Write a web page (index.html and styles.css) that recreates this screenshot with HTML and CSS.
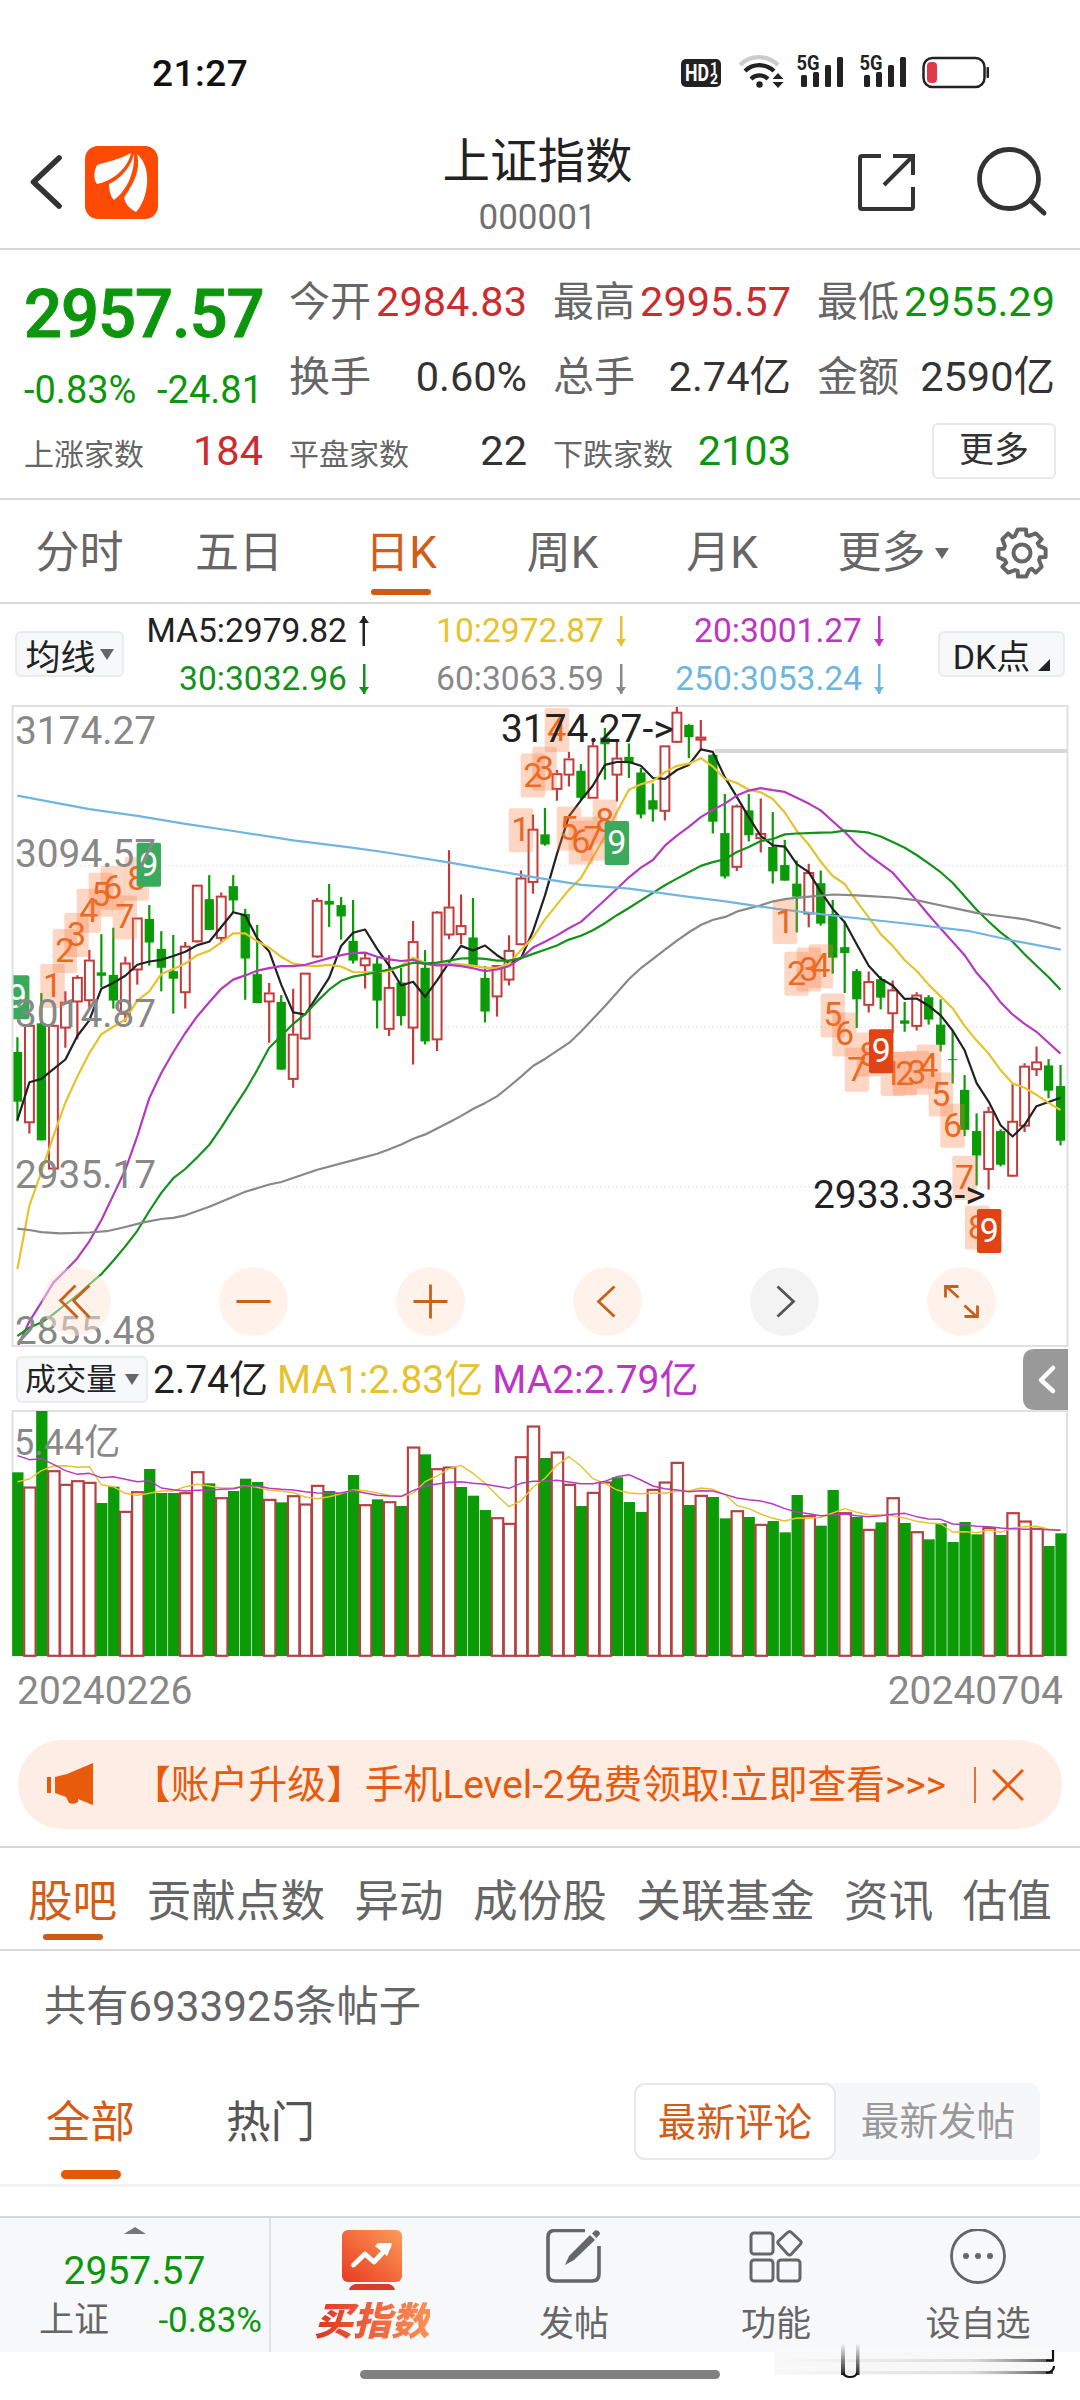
FILE: index.html
```html
<!DOCTYPE html>
<html lang="zh-CN">
<head>
<meta charset="utf-8">
<title>上证指数</title>
<link rel="stylesheet" href="styles.css">
</head>
<body>
<div class="status">
  <span class="clock">21:27</span>
  <svg class="status-icons" width="320" height="40" viewBox="680 52 320 40">
    <rect x="681" y="59" width="40" height="28" rx="5" fill="#222"/>
    <text x="685" y="81" font-size="23" font-weight="700" fill="#fff" textLength="24" lengthAdjust="spacingAndGlyphs">HD</text>
    <text x="710" y="72.500" font-size="14" font-weight="700" fill="#fff">1</text>
    <text x="710" y="84" font-size="14" font-weight="700" fill="#fff">2</text>
    <g fill="none" stroke="#222" stroke-width="4.2">
      <path d="M740 65a27 27 0 0 1 38 0" stroke="#ccc"/>
      <path d="M745 71a21 21 0 0 1 29 0"/>
      <path d="M751 79a12 12 0 0 1 17 0"/>
    </g>
    <circle cx="759.500" cy="84.500" r="3.2" fill="#222"/>
    <path d="M778 73l5.500 6h-11zM778 88l5.500-6h-11z" fill="#222"/>
    <g id="sig" fill="#222">
      <text x="796.500" y="70" font-size="20" font-weight="700" textLength="23" lengthAdjust="spacingAndGlyphs">5G</text>
      <rect x="801" y="75" width="6" height="12" rx="1.500"/><rect x="813" y="72" width="6" height="15" rx="1.500"/>
      <rect x="825" y="65" width="6" height="22" rx="1.500"/><rect x="837" y="57" width="6" height="30" rx="1.500"/>
    </g>
    <use href="#sig" x="63"/>
    <rect x="923.5" y="58" width="61" height="29" rx="9" fill="none" stroke="#222" stroke-width="2.5"/>
    <rect x="927" y="62" width="10" height="21" rx="4" fill="#e0394a"/>
    <rect x="986.5" y="67" width="2.5" height="11" rx="1" fill="#222"/>
  </svg>
</div>
<header class="header">
  <svg width="160" height="80" viewBox="20 142 160 80">
    <path d="M59 158L33.500 182L59 206" fill="none" stroke="#333" stroke-width="5.600" stroke-linecap="round" stroke-linejoin="round"/>
    <rect x="85" y="146" width="73" height="73" rx="13" fill="#fe4a05"/>
    <g fill="#fff">
      <path d="M131 153C121 159 106 162 97 165C93 173 94 180 97 184C113 181 128 168 131 153Z"/>
      <path d="M134 154C130 170 118 180 109 184C109 191 111 197 114 200C126 191 135 174 134 154Z"/>
      <path d="M137 154C142 174 129 189 124 198C126 205 130 209 136 212C147 201 154 169 137 154Z"/>
    </g>
  </svg>
  <div class="title"><h1>上证指数</h1><p>000001</p></div>
  <svg width="200" height="80" viewBox="850 142 200 80" fill="none" stroke="#333" stroke-width="4">
    <path d="M881 156H862Q860 156 860 158V207Q860 209 862 209H911Q913 209 913 207V187M893 156H913V175M913 156L884 185"/>
    <circle cx="1009" cy="179" r="29.5" stroke-width="4.8"/><path d="M1030 200L1044 213" stroke-width="5" stroke-linecap="round"/>
  </svg>
</header>
<section class="quote">
  <div class="quote-main">
    <strong>2957.57</strong>
    <div class="pair green chg"><span>-0.83%</span><span>-24.81</span></div>
    <div class="pair small"><span>上涨家数</span><b class="red">184</b></div>
  </div>
  <div class="quote-col">
    <div class="pair"><span>今开</span><b class="red">2984.83</b></div>
    <div class="pair"><span>换手</span><b>0.60%</b></div>
    <div class="pair small"><span>平盘家数</span><b>22</b></div>
  </div>
  <div class="quote-col">
    <div class="pair"><span>最高</span><b class="red">2995.57</b></div>
    <div class="pair"><span>总手</span><b>2.74亿</b></div>
    <div class="pair small"><span>下跌家数</span><b class="green">2103</b></div>
  </div>
  <div class="quote-col">
    <div class="pair"><span>最低</span><b class="green">2955.29</b></div>
    <div class="pair"><span>金额</span><b>2590亿</b></div>
    <button class="more">更多</button>
  </div>
</section>
<nav class="periods">
  <span>分时</span><span>五日</span><span class="on">日K</span><span>周K</span><span>月K</span><span class="drop">更多<i></i></span>
  <svg width="52" height="52" viewBox="-26 -26 52 52" fill="none" stroke="#666" stroke-width="4" stroke-linejoin="round">
    <circle r="8.5"/>
    <path id="gear"/>
  </svg>
</nav>
<section class="legend">
  <button class="chip ma">均线<i></i></button>
  <div class="ma-grid">
    <span class="c5">MA5:2979.82<i class="arrow up"></i></span><span class="c10">10:2972.87<i class="arrow"></i></span><span class="c20">20:3001.27<i class="arrow"></i></span>
    <span class="c30">30:3032.96<i class="arrow"></i></span><span class="c60">60:3063.59<i class="arrow"></i></span><span class="c250">250:3053.24<i class="arrow"></i></span>
  </div>
  <button class="chip dk">DK点<i></i></button>
</section>
<svg id="kline" class="chart" width="1080" height="642" viewBox="0 705 1080 642"></svg>
<section class="vol-head">
  <button class="chip vol">成交量<i></i></button>
  <span>2.74亿</span><span class="c10">MA1:2.83亿</span><span class="c20">MA2:2.79亿</span>
  <svg class="collapse" width="45" height="61" viewBox="0 0 45 61"><path d="M12 0H45V61H12Q0 61 0 49V12Q0 0 12 0Z" fill="#999"/><path d="M30 19L18 31L30 42" fill="none" stroke="#fff" stroke-width="4.5" stroke-linecap="round" stroke-linejoin="round"/></svg>
</section>
<svg id="volume" class="chart" width="1080" height="248" viewBox="0 1409 1080 248"></svg>
<div class="dates"><span>20240226</span><span>20240704</span></div>
<div class="banner">
  <svg width="50" height="44" viewBox="0 0 50 44" fill="#e85a0c"><rect x="0" y="14" width="4" height="16"/><path d="M8 14L20 11L46 0V42L31 36V39Q27 42 22 40L19 34L8 30Z"/></svg>
  <p>【账户升级】手机Level-2免费领取!立即查看&gt;&gt;&gt;</p><i></i>
  <svg width="32" height="32" viewBox="0 0 32 32"><path d="M1 1L31 31M31 1L1 31" stroke="#e85a0c" stroke-width="3"/></svg>
</div>
<nav class="topics"><span class="on">股吧</span><span>贡献点数</span><span>异动</span><span>成份股</span><span>关联基金</span><span>资讯</span><span>估值</span></nav>
<p class="count">共有6933925条帖子</p>
<div class="filters">
  <span class="on">全部</span><span>热门</span>
  <div class="switch"><button class="active">最新评论</button><button>最新发帖</button></div>
</div>
<footer class="bottom">
  <div class="index"><i></i><strong>2957.57</strong><div><span>上证</span><b>-0.83%</b></div></div>
  <div class="item hot">
    <svg width="66" height="66" viewBox="0 0 66 66">
      <defs><linearGradient id="g" x1="0" y1="1" x2="1" y2="0"><stop offset="0" stop-color="#e93a20"/><stop offset="1" stop-color="#fd9b58"/></linearGradient></defs>
      <rect x="3" y="1" width="60" height="52" rx="6" fill="url(#g)"/><path d="M16 55H50Q55 56 56 61H10Q11 56 16 55Z" fill="#dc3a2c"/>
      <path d="M14.500 36L26 25L35 33L47 20" fill="none" stroke="#fff" stroke-width="4.800" stroke-linejoin="round" stroke-linecap="round"/><path d="M39 14H52.500V17L48 27L36 17Z" fill="#fff"/>
    </svg><span>买指数</span></div>
  <div class="item">
    <svg width="66" height="66" viewBox="0 0 66 66" fill="none" stroke="#666" stroke-width="3.6"><path d="M44 1.500H14Q7 1.500 7 8V45Q7 52 14 52H51Q58 52 58 45V17"/><path d="M24 36L28 27L49 6L54 11L33 31Z" fill="#666" stroke="none"/><path d="M51 4.500L54 1.500Q58 .5 59 5L55.500 9Z" fill="#666" stroke="none"/></svg><span>发帖</span></div>
  <div class="item">
    <svg width="66" height="66" viewBox="0 0 66 66" fill="none" stroke="#666" stroke-width="3"><rect x="8" y="4" width="22" height="21" rx="3"/><rect x="8" y="31" width="22" height="21" rx="3"/><rect x="35" y="31" width="22" height="21" rx="3"/><path d="M44.500 3.500Q46.500 1.500 48.500 3.500L57.500 12Q59 13.500 57.500 15L48.500 25Q46.500 27 44.500 25L35.500 15Q34 13.500 35.500 12Z"/></svg><span>功能</span></div>
  <div class="item">
    <svg width="66" height="66" viewBox="0 0 66 66" fill="#666"><circle cx="33" cy="27" r="26.500" fill="none" stroke="#666" stroke-width="2.800"/><circle cx="21" cy="27" r="3"/><circle cx="33" cy="27" r="3"/><circle cx="45" cy="27" r="3"/></svg><span>设自选</span></div>
</footer>
<div class="home"><i></i></div>
<svg class="smudge" width="300" height="40" viewBox="765 2340 300 40">
  <defs><linearGradient id="s" x1="0" x2="1"><stop offset="0" stop-color="#888" stop-opacity="0"/><stop offset=".7" stop-color="#888" stop-opacity=".25"/><stop offset="1" stop-color="#333" stop-opacity=".85"/></linearGradient>
  <linearGradient id="v" x1="0" y1="0" x2="0" y2="1"><stop offset="0" stop-color="#000" stop-opacity="0"/><stop offset="1" stop-color="#000"/></linearGradient>
  <linearGradient id="w" x1="0" y1="0" x2="0" y2="1"><stop offset="0" stop-color="#fff" stop-opacity="0"/><stop offset="1" stop-color="#fff"/></linearGradient></defs>
  <path d="M775 2342H1050V2375H775Z" fill="url(#w)"/>
  <path d="M775 2352H1050V2375H775Z" fill="#ddd" opacity=".2"/>
  <rect x="780" y="2359" width="273" height="3" fill="url(#s)"/><rect x="780" y="2371" width="273" height="3" fill="url(#s)"/>
  <rect x="841" y="2343" width="4" height="32" fill="url(#v)" opacity=".85"/><rect x="856" y="2343" width="3.500" height="32" fill="url(#v)" opacity=".85"/>
  <path d="M843 2373Q845 2377 850 2377Q856 2377 857 2373M1053 2350V2360.500H1046M1054 2366Q1054 2372 1046 2373" fill="none" stroke="#111" stroke-width="2.200"/>
</svg>
<script src="chart.js"></script>
</body>
</html>
```
FILE: styles.css
```css
* { box-sizing: border-box; }
body { margin: 0; width: 1080px; height: 2400px; overflow: hidden; background: #fff; color: #333; font-family: Roboto, "Noto Sans CJK SC", sans-serif; display: flex; flex-direction: column; }
body > * { flex: none; }
h1, p { margin: 0; font-weight: 400; }
b { font-weight: 400; }
button { font: inherit; color: inherit; padding: 0; background: none; border: 0; }
svg { display: block; flex: none; }
.red { color: #cb2c2f; }
.green { color: #0d960d; }
.status { height: 142px; padding: 52px 80px 0 152px; display: flex; justify-content: space-between; }
.clock { font-size: 37px; line-height: 43px; font-weight: 500; color: #111; letter-spacing: .5px; }
.header { height: 108px; padding: 0 30px 0 20px; border-bottom: 2px solid #d8d8d8; display: flex; justify-content: space-between; }
.title { text-align: center; margin-right: -45px; margin-top: -13px; }
.title h1 { font-size: 47.500px; line-height: 66px; color: #222; }
.title p { font-size: 35px; line-height: 42px; margin-top: 2px; color: #707070; }
.quote { height: 250px; border-bottom: 2px solid #d8d8d8; padding: 22px 25px 0 24px; display: grid; grid-template-columns: 239px 238px 238px 238px; column-gap: 26px; }
.quote-main { display: grid; grid-template-columns: 239px; grid-template-rows: 84px 67px 60px; align-items: center; }
.quote-main strong { font-size: 67px; line-height: 84px; font-weight: 500; color: #0d960d; letter-spacing: -1.1px; -webkit-text-stroke: 1px #0d960d; }
.quote-col { display: grid; grid-template-rows: 59px 91px 61px; align-items: center; }
.pair { display: flex; justify-content: space-between; align-items: baseline; font-size: 41px; line-height: 60px; white-space: nowrap; }
.pair span { color: #666; }
.pair b { font-size: 41.500px; }
.pair.small span { font-size: 30px; }
.pair.chg span { font-size: 38px; color: #0d960d; }
.more { justify-self: end; width: 124px; height: 56px; margin: -4px -1px 0 0; border: 2px solid #e8e8e8; border-radius: 6px; font-size: 35px; line-height: 50px; }
.periods { height: 104px; border-bottom: 2px solid #d8d8d8; display: grid; grid-template-columns: 159px 160px 164px 159px 160px 182px 76px; justify-items: center; align-items: center; font-size: 44px; line-height: 106px; color: #666; }
.periods .on, .topics .on, .filters .on { color: #d35d16; position: relative; }
.periods .on::after, .topics .on::after, .filters .on::after { content: ""; position: absolute; left: calc(50% - 30px); bottom: 11px; width: 60px; height: 6px; border-radius: 3px; background: #ce5a14; }
.drop { display: flex; align-items: center; gap: 9px; }
.drop i, .chip i { border: solid transparent; border-width: 11px 7.500px 0; border-top-color: #666; }
.legend { height: 101px; padding: 0 15px; display: flex; align-items: flex-start; color: #222; }
.chip { background: #f6f8f9; border: 2px solid #e9ebec; border-radius: 6px; display: flex; align-items: center; justify-content: center; font-size: 35px; white-space: nowrap; color: #222; }
.chip.ma { width: 109px; height: 46px; margin-top: 27px; gap: 4px; }
.chip.dk { width: 127px; height: 46px; margin-top: 27px; font-size: 34px; gap: 8px; }
.chip.dk i { border-width: 0 0 12px 12px; border-color: transparent transparent #222; align-self: flex-end; margin-bottom: 4px; }
.ma-grid { flex: 1; display: grid; grid-template-columns: 246px 257px 258px; grid-template-rows: 48px 48px; padding-top: 3px; font-size: 33.600px; line-height: 48px; }
.ma-grid span { display: flex; justify-content: flex-end; align-items: center; gap: 11px; }
.arrow { position: relative; width: 12px; height: 30px; background: linear-gradient(currentColor, currentColor) 50% / 2.500px 100% no-repeat; }
.arrow::after { content: ""; position: absolute; bottom: 0; left: 1px; border: solid transparent; border-width: 7px 5px 0; border-top-color: currentColor; }
.arrow.up { transform: rotate(180deg); }
.c5 { color: #222; } .c10 { color: #e6c22d; } .c20 { color: #bd35c5; } .c30 { color: #12921a; } .c60 { color: #888; } .c250 { color: #6eb6e0; }
.vol-head { height: 62px; padding: 2px 12px 0 16px; display: flex; gap: 9px; font-size: 39px; line-height: 62px; color: #222; }
.chip.vol { width: 132px; height: 47px; margin: 7px -4px 0 0; font-size: 30.500px; gap: 8px; }
.collapse { margin-left: auto; }
.dates { height: 83px; padding: 11px 17px 0; display: flex; justify-content: space-between; font-size: 39px; line-height: 46px; color: #888; }
.banner { height: 89px; margin: 0 18px; padding: 0 38px 0 29px; border-radius: 44px; background: #fdede4; color: #e85a0c; display: flex; align-items: center; font-size: 38.800px; }
.banner p { margin-left: 35px; white-space: nowrap; flex: 1; line-height: 60px; }
.banner i { width: 2px; height: 36px; background: #e0763c; margin-right: 16px; }
.topics { height: 105px; margin-top: 17px; border: solid #d8d8d8; border-width: 2px 0; padding: 0 28px; display: flex; justify-content: space-between; font-size: 44.600px; line-height: 109px; color: #666; }
.topics .on::after { bottom: 9px; }
.count { height: 107px; padding: 0 44px; font-size: 42.200px; line-height: 111px; color: #666; }
.filters { height: 129px; padding: 0 40px 0 46px; border-bottom: 3px solid #f3f3f3; display: flex; align-items: flex-start; gap: 91px; font-size: 44.500px; line-height: 130px; color: #555; }
.filters .on::after { bottom: 9px; height: 9px; border-radius: 5px; background: #e4580b; }
.switch { margin: 25px 0 0 auto; display: flex; background: #f6f7f9; border-radius: 10px; font-size: 38.600px; line-height: 75px; color: #999; }
.switch button { width: 204px; height: 77px; }
.switch .active { width: 202px; color: #d35d16; background: #fff; border: 2px solid #e8e8e8; border-radius: 11px; }
.bottom { height: 136px; margin-top: 29px; background: #f6f8f9; border-top: 2px solid #d5d8d9; display: grid; grid-template-columns: 271px repeat(4, 202px); color: #666; }
.index { border-right: 2px solid #dfe2e3; display: flex; flex-direction: column; align-items: center; color: #0d960d; }
.index > i { border: solid transparent; border-width: 0 11px 7px; border-bottom-color: #777; margin-top: 9px; }
.index strong { font-size: 39px; line-height: 46px; font-weight: 400; margin-top: 14px; }
.index > div { width: 223px; margin: -1px 0 0 32px; display: flex; justify-content: space-between; align-items: baseline; font-size: 35px; line-height: 56px; }
.index span { color: #666; }
.item { display: flex; flex-direction: column; align-items: center; padding-top: 11px; font-size: 35px; line-height: 52px; }
.item svg + span { margin-top: 4px; }
.hot span { font-size: 38.500px; font-weight: 900; font-style: italic; transform: translateY(-3px); background: linear-gradient(90deg, #dc3525, #fd9156); background-clip: text; color: transparent; }
.home { height: 47px; padding-top: 18px; }
.home i { display: block; width: 360px; height: 9px; margin: 0 auto; border-radius: 5px; background: #808080; }
.smudge { position: absolute; left: 765px; top: 2340px; }
.chart text { font-family: Roboto, "Noto Sans CJK SC", sans-serif; }
.axis { font-size: 38.800px; fill: #888; }
.note { font-size: 38.900px; fill: #222; }
.mark { font-size: 34px; text-anchor: middle; }
```
FILE: chart.js
```js
// Teeth of the settings gear: eight flat tips on a ring.
const teeth = [];
for (let k = 0; k < 8; k++) {
  for (const [o, r] of [[-.22, 24], [.22, 24], [.3, 18.5], [.5, 18.5]]) {
    const a = (k + o) * Math.PI / 4;
    teeth.push((r * Math.sin(a)).toFixed(1) + ' ' + (-r * Math.cos(a)).toFixed(1));
  }
}
document.getElementById('gear').setAttribute('d', 'M' + teeth.join('L') + 'Z');

const RED = '#c33c3c', GREEN = '#0a9b06';
const X = i => 17.4 + i * 11.99;
const GX = u => u / 3;                 // price pane: three units per pixel across
const Y = v => 690 + v / 2.376;        // price pane: 380 units per 79.7 points
const VY = v => 1340 + v / 3;          // volume pane
const line = (pts, color, w) => `<polyline points="${pts.map(p => p[0].toFixed(1) + ',' + p[1].toFixed(1)).join(' ')}" fill="none" stroke="${color}" stroke-width="${w}" stroke-linejoin="round"/>`;
const nums = s => s.trim().split(/[\s,]+/).map(Number);
const series = (s, f, c, w) => line(nums(s).map((v, i) => [X(i), f(v)]), c, w);
const points = (s, c, w) => line(s.trim().split(/\s+/).map(p => p.split(':')).map(([x, y]) => [GX(+x), Y(+y)]), c, w);

// direction, high, body top, body bottom, low
const candles = `G825,860,978,1025 R796,796,1028,1054 G720,792,1070,1070 R796,796,1138,1138 R716,741,803,850 R678,682,741,830 R618,641,738,755 G580,671,679,706 G565,677,738,757 R634,648,770,788
R541,541,665,700 G511,544,600,655 G573,615,660,716 G582,668,686,769 R599,608,719,757 R463,463,598,600 G440,497,570,570 R481,489,590,598 G440,466,500,530 G520,532,638,736
G558,675,744,744 R696,719,741,838 G725,741,902,902 R710,817,925,945 R672,672,829,831 R494,499,634,636 G461,501,510,563 G492,511,538,593 G499,596,643,650 R625,636,655,709
G636,650,738,804 R630,706,806,822 G660,695,775,797 R549,597,803,890 G618,660,835,842 R525,527,831,858 R381,515,582,592 R486,559,581,604 G494,588,655,655 G656,684,764,790
R654,654,729,776 R583,618,689,702 R429,446,605,606 R296,330,457,484 G280,343,367,370 R190,198,236,263 R147,163,202,229 G176,192,256,262 R122,132,257,257 G90,113,129,213
R121,161,202,265 G127,159,174,209 G185,196,296,305 G222,262,284,313 R132,132,288,310 R38,52,124,126 G81,83,112,162 R71,111,119,140 G152,154,313,341 G247,340,443,448
R272,275,421,430 G247,286,345,360 R258,340,353,386 G290,373,431,460 G356,416,453,453 G405,460,491,576 R413,433,532,564 G429,459,555,560 G499,532,636,674 G550,611,625,720
G663,668,735,803 R669,692,749,766 G680,687,731,759 R690,712,769,815 G741,785,793,812 R718,724,799,809 G725,730,783,795 G735,795,843,859 G810,877,879,935 G915,950,1045,1060
G1006,1048,1106,1177 R990,1001,1139,1187 G1044,1048,1128,1132 R937,1024,1155,1156 R887,893,1036,1050 R847,883,902,917 G877,892,952,970 G891,941,1071,1082`.split(/\s+/);

let k = '';
for (const v of [417, 800, 1180]) k += `<path d="M12 ${Y(v)}H1067" stroke="#ececec" stroke-width="1.5" stroke-dasharray="2 2"/>`;
k += `<path d="M715 ${Y(145)}H1067" stroke="#d8d8d8" stroke-width="4"/>`;
candles.forEach((c, i) => {
  const [h, t, b, l] = nums(c.slice(1)).map(Y), x = X(i);
  if (c[0] === 'G') k += `<path d="M${x} ${h}V${l}" stroke="${GREEN}" stroke-width="2.2"/><rect x="${x - 4.6}" y="${t}" width="9.300" height="${Math.max(b - t, 1)}" fill="${GREEN}"/>`;
  else k += `<path d="M${x} ${h}V${t}M${x} ${b}V${l}" stroke="${RED}" stroke-width="2.200"/><rect x="${x - 4.4}" y="${t + .8}" width="8.9" height="${Math.max(b - t - 1.2, 1)}" fill="#fff" stroke="${RED}" stroke-width="2"/>`;
});
k += series(`1022 932 924 901 878 822 785 710 696 679 653 645 641 632 622 606 598 563 528 535 590 621 700 766 771 728 684 608 577 569 615 655 702 693 729 690 648 608 619 607 630 648 637 573 488 390 300 262 227 178 171 171 180 209 211 190 178 141 147 207 254 302 347 369 372 414 433 479 520 552 604 655 686 702 734 733 750 773 809 856 934 978 1034 1061 1033 989 979 969`, Y, '#222', 2.2);
k += series(`1376 1225 1145 1060 980 919 863 818 800 783 738 716 675 663 650 630 620 600 578 578 597 612 634 650 655 656 653 657 670 671 670 668 655 636 648 652 650 652 655 660 660 650 618 588 545 510 475 447 397 348 290 237 224 216 195 180 175 162 182 211 221 237 243 259 291 335 367 408 442 461 502 540 580 608 642 667 700 728 756 798 833 864 903 935 945 962 981 998`, Y, '#e6c22d', 2.2);
k += series(`1562 1500 1455 1408 1380 1350 1310 1260 1200 1140 1060 970 910 860 815 775 742 710 688 678 667 661 656 656 653 645 637 630 625 624 634 640 644 641 651 654 653 656 661 668 664 656 637 612 598 583 566 551 525 499 472 445 422 404 370 346 325 302 285 270 251 239 233 238 242 256 270 286 312 337 367 392 413 434 467 500 534 567 598 630 672 704 742 771 793 812 838 864`, Y, '#b53abf', 2.2);
k += series(`1535 1515 1503 1483 1460 1438 1412 1388 1356 1322 1285 1238 1195 1160 1138 1110 1081 1040 995 952 903 850 822 793 770 740 712 691 681 676 670 664 656 648 650 648 643 638 637 639 643 643 637 627 617 607 593 584 571 554 535 518 500 482 464 448 433 418 409 402 385 373 359 354 343 341 340 339 338 334 336 339 348 361 375 392 412 433 458 490 522 550 576 598 628 655 682 712`, Y, '#12921a', 2.2);
k += points(`52:1280 88:1283 124:1288 180:1291 268:1289 320:1286 376:1276 430:1265 484:1257 520:1254 556:1248 628:1228 736:1192 808:1175 844:1169 952:1140 1080:1113 1132:1102 1168:1091 1204:1080 1240:1066 1276:1056 1348:1027 1384:1012 1420:995 1456:981 1492:965 1528:942 1564:918 1600:893 1636:876 1708:838 1744:811 1816:750 1888:686 1924:660 1996:616 2032:595 2068:575 2104:558 2140:546 2176:539 2212:526 2280:512 2320:502 2360:496 2428:491 2500:486 2572:488 2680:493 2752:500 2824:512 2880:521 2932:530 3000:537 3076:545 3130:555 3182:567`, '#888', 2.2);
k += points(`52:251 268:283 412:299 556:318 700:335 880:357 1050:374 1150:385 1350:410 1564:440 1744:463 1888:472 2050:490 2176:502 2330:520 2510:537 2730:556 2910:573 3030:594 3182:617`, '#70b5dd', 2.2);

// digit, left, top, optional fill for the closing nine
const marks = `9,15,678,g 1,121,651 2,158,568 3,193,530 4,230,472 5,266,434 6,302,418 7,338,488 8,374,396 9,410,363,g
1,1526,281 2,1562,151 3,1597,135 4,1634,43 5,1670,277 6,1706,310 7,1742,301 8,1778,260 9,1814,311,g
1,2318,499 2,2353,622 3,2390,612 4,2426,604 5,2462,721 6,2497,766 7,2534,850 8,2570,814 1,2642,860 9,2607,806,r
2,2678,859 3,2714,857 4,2750,842 5,2786,909 6,2821,983 7,2857,1107 8,2895,1225 9,2931,1233,r`.split(/\s+/);
k += '<defs><clipPath id="pane"><rect x="12" y="705" width="1056" height="642"/></clipPath></defs><g clip-path="url(#pane)">';
for (const m of marks) {
  const [d, x, y, c] = m.split(',');
  const fill = c === 'g' ? '#3aaa5c' : c === 'r' ? '#e04416' : 'rgba(252,118,58,.3)';
  k += `<rect x="${GX(+x)}" y="${Y(+y)}" width="24.4" height="44" rx="2" fill="${fill}"/><text class="mark" x="${GX(+x) + 12.2}" y="${Y(+y) + 33}" fill="${c ? '#fff' : '#e8691f'}">${d}</text>`;
}
k += '</g>';
[['3174.27', 129], ['3094.57', 420], ['3014.87', 801], ['2935.17', 1184], ['2855.48', 1554]].forEach(([t, y]) => k += `<text class="axis" x="15" y="${Y(y)}">${t}</text>`);
k += `<text class="note" x="501" y="${Y(124)}">3174.27-&gt;</text><text class="note" x="813" y="${Y(1231)}">2933.33-&gt;</text>`;
k += '<rect x="12.5" y="706" width="1055" height="640" fill="none" stroke="#e0e0e0" stroke-width="2"/>';
const icons = ['M-1 -16L-16 -1L1 16M13 -16L-3 -1L13 16', 'M-17 0H17', 'M-17 0H17M0 -17V17', 'M7 -15L-9 0L7 15', 'M-7 -15L9 0L-7 15', 'M-16 -4V-15H-3M-15 -15L-3 -4M16 4V15H3M15 15L3 4'];
icons.forEach((d, i) => {
  const x = 76.500 + i * 177;
  k += `<g transform="translate(${x.toFixed(1)} 1301.5)"><circle r="34.3" fill="${i === 4 ? '#e7e7e7' : '#fee5d8'}" fill-opacity=".5"/><path d="${d}" fill="none" stroke="${i === 4 ? '#555' : '#c8601a'}" stroke-width="2.8"/></g>`;
});
document.getElementById('kline').innerHTML = k;

const vols = `G397 R445 G213 R396 R437 R426 R431 G489 G440 R518 R459 G387 G459 G459 R462 R399 G430 R477 G453 G416 G426 R482 G487 R471 R496 R440 G453 G459 G405 R498 G478 R489 G498 R325 G343 R390 R385 G441 G467 G510 R537 R554 R354 R262
G354 R340 R437 G498 R461 R430 G412 G486 G516 R452 R430 R371 G495 R470 G471 G535 R516 G531 R557 G543 G577 G465 R531 G557 G450 R522 G531 R572 G547 R477 G549 R579 G598 G550 G606 G546 G583 R567 G585 R522 R547 R569 G618 G580`.split(/\s+/);
let v = '<path d="M12.5 1657V1411H1067V1657" fill="none" stroke="#e0e0e0" stroke-width="2"/>';
vols.forEach((b, i) => {
  const x = X(i), t = VY(+b.slice(1));
  v += b[0] === 'G' ? `<rect x="${x - 5.200}" y="${t}" width="11.3" height="${1656 - t}" fill="${GREEN}"/>`
    : `<rect x="${x - 5.200}" y="${t - .8}" width="11.400" height="${1656.600 - t}" fill="#fff" stroke="#b34343" stroke-width="2.200"/>`;
});
v += series(`425 417 392 378 377 382 380 434 440 460 466 460 453 453 440 433 438 444 444 437 442 451 453 458 471 476 470 461 450 452 459 466 470 460 425 408 386 376 400 430 466 500 483 442 415 375 350 378 416 430 450 459 461 459 460 453 453 444 448 463 496 506 522 535 543 534 535 532 519 506 517 524 525 527 534 544 549 551 576 575 578 570 577 564 560 559 568 570`, VY, '#e6c22d', 1.4);
v += series(`347 359 356 373 392 403 400 413 410 418 425 422 444 449 453 451 450 448 446 438 437 445 448 450 455 459 460 458 452 459 466 468 469 452 438 432 427 425 430 433 439 445 430 424 424 421 426 431 431 424 410 404 420 438 446 450 455 452 453 463 474 479 483 492 506 516 521 527 525 522 527 530 527 523 520 530 537 538 552 554 559 560 564 566 568 568 569 571`, VY, '#b53abf', 1.4);
v += '<text class="axis" x="14" y="1455" style="font-size:36px">5.44亿</text>';
document.getElementById('volume').innerHTML = v;
```
